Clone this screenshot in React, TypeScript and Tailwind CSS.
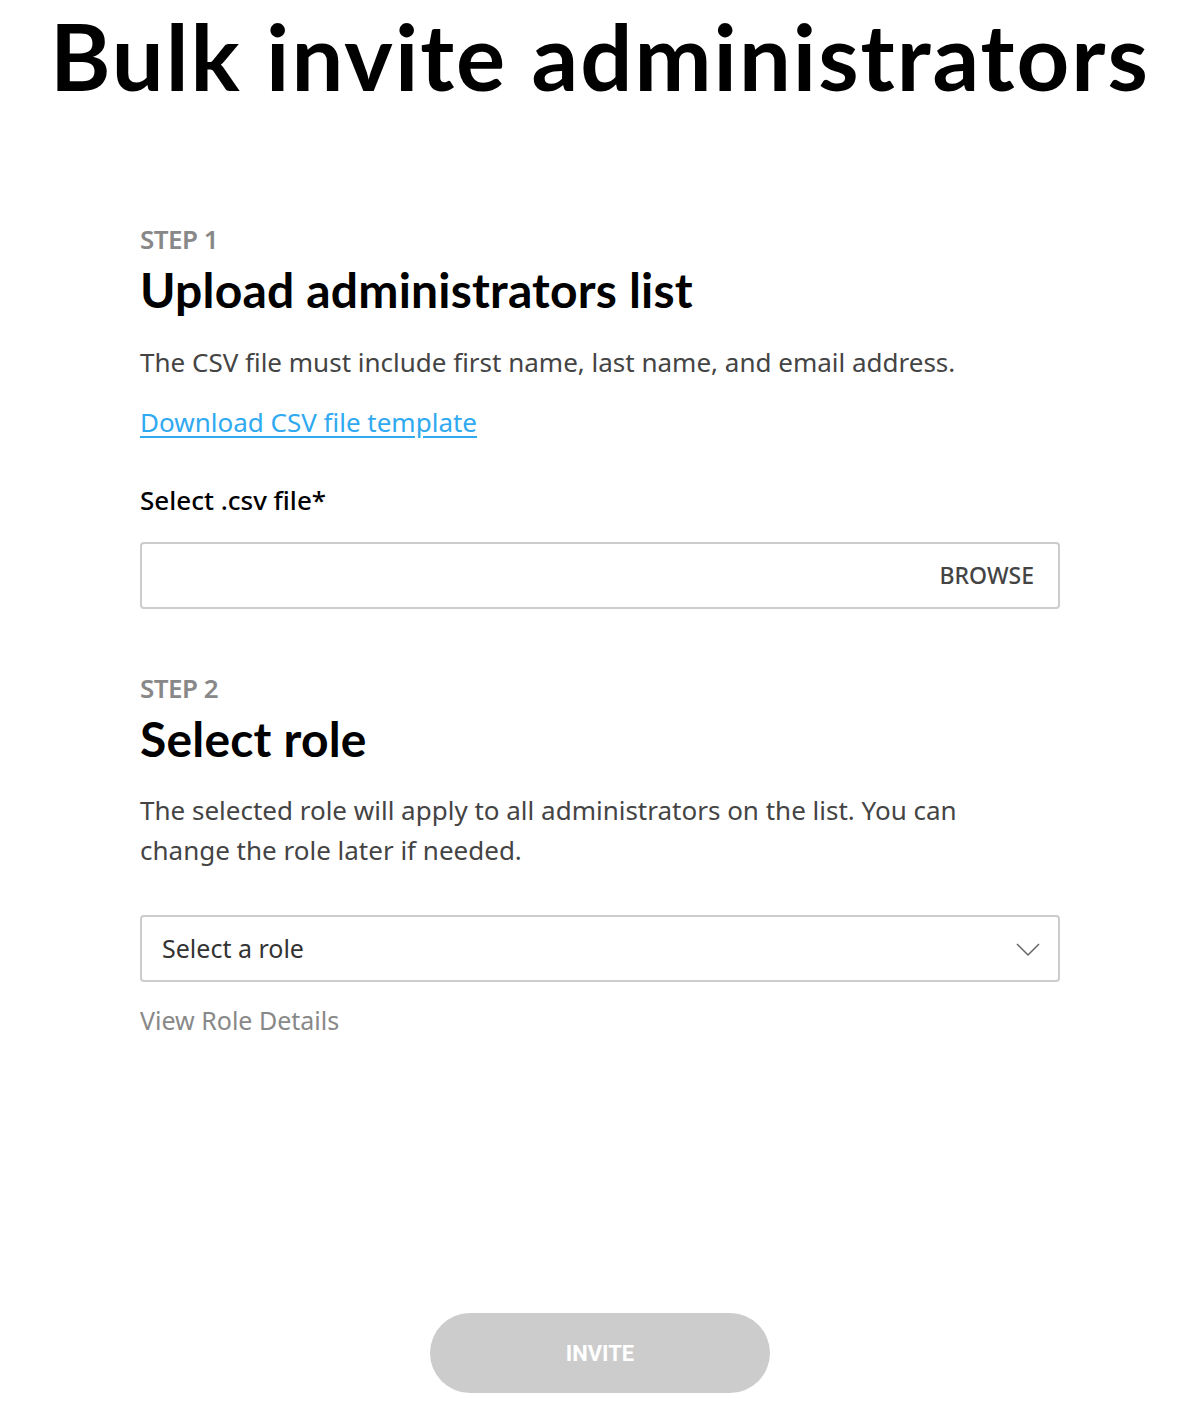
const body = "font-['Noto_Sans','Roboto',sans-serif]";
const display = "font-['Lato','Inter',sans-serif]";

const StepHeader = ({ step, title }: { step: string; title: string }) => (
  <div className="flex flex-col">
    <span className={`${body} text-[26px] leading-[30px] font-semibold text-[#888888] tracking-[-0.5px]`}>{step}</span>
    <h2 className={`${display} mt-[10px] text-[48px] leading-[52px] font-bold text-black tracking-[0.2px]`}>{title}</h2>
  </div>
);

export default function App() {
  return (
    <div className="w-[1200px] min-h-[1414px] bg-white flex flex-col items-center">
      <h1 className={`${display} text-[92px] leading-[111px] font-bold text-black tracking-[2px]`}>
        Bulk invite administrators
      </h1>

      <div className="w-[920px] mt-[113px] flex flex-col">
        <StepHeader step="STEP 1" title="Upload administrators list" />
        <p className={`${body} mt-[26px] text-[26px] leading-[40px] text-[#444444]`}>
          The CSV file must include first name, last name, and email address.
        </p>
        <a href="#" className={`${body} mt-[20px] text-[26px] leading-[40px] text-[#2fa9f0] underline underline-offset-4 self-start`}>
          Download CSV file template
        </a>
        <label className={`${body} mt-[38px] text-[26px] leading-[40px] font-medium text-black`}>Select .csv file*</label>
        <div className="mt-[22px] h-[67px] border-2 border-[#cccccc] rounded-[4px] flex items-center justify-end px-[24px]">
          <span className={`${body} text-[23px] font-medium text-[#444444]`}>BROWSE</span>
        </div>

        <div className="mt-[64px]">
          <StepHeader step="STEP 2" title="Select role" />
        </div>
        <p className={`${body} mt-[25px] text-[26px] leading-[40px] text-[#444444] w-[860px]`}>
          The selected role will apply to all administrators on the list. You can change the role later if needed.
        </p>
        <div className="mt-[45px] h-[67px] border-2 border-[#cccccc] rounded-[4px] flex items-center justify-between pl-[20px] pr-[18px]">
          <span className={`${body} text-[25px] text-[#333333]`}>Select a role</span>
          <svg width="24" height="14" viewBox="0 0 24 14" fill="none" className="mt-[2px]">
            <polyline points="1,1 12,12 23,1" stroke="#666666" strokeWidth="1.5" />
          </svg>
        </div>
        <span className={`${body} mt-[18px] text-[25px] leading-[40px] text-[#888888]`}>View Role Details</span>
      </div>

      <button className="font-['Roboto',sans-serif] mt-[273px] w-[340px] h-[80px] rounded-full bg-[#cccccc] text-white text-[22px] font-bold">
        INVITE
      </button>
    </div>
  );
}
